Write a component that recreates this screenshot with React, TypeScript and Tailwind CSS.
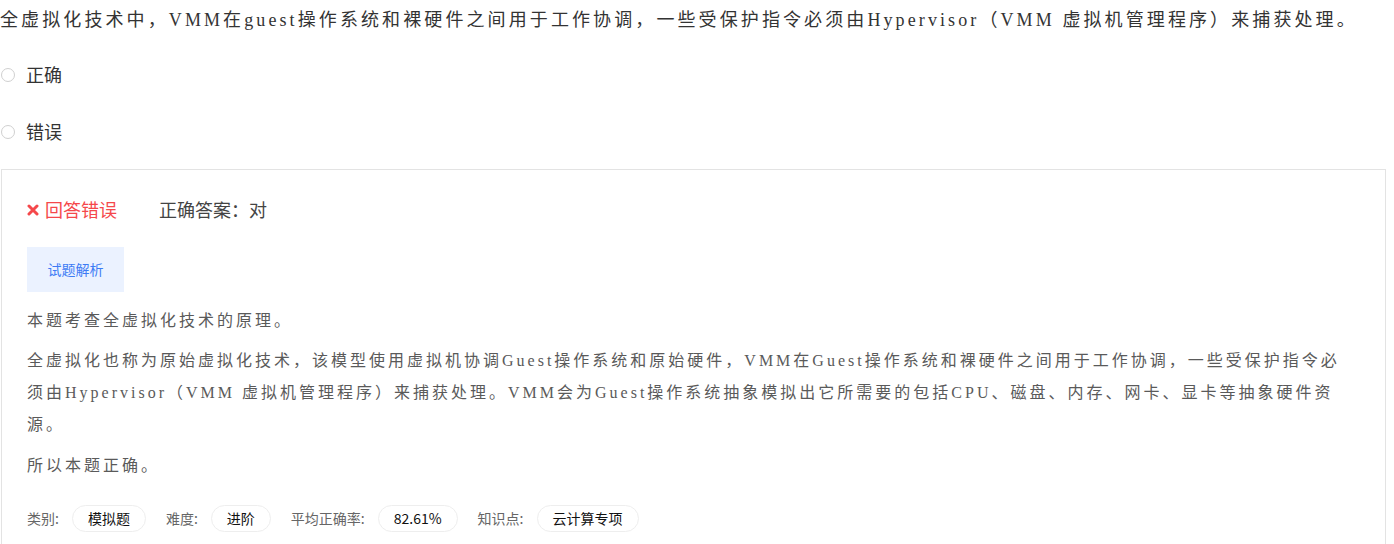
const serif = "font-['Liberation_Serif','Noto_Sans_CJK_SC',serif]"
const sans = "font-['Noto_Sans_CJK_SC',sans-serif]"

const Tag = ({ label, value }: { label: string; value: string }) => (
  <div className="flex flex-row items-center mr-[20px]">
    <span className="text-[14px] text-[#666]">{label}:</span>
    <span className="ml-[13px] px-[15px] h-[27px] flex items-center rounded-full border border-[#eee] text-[14px] text-[#111]">
      {value}
    </span>
  </div>
)

const Option = ({ text }: { text: string }) => (
  <div className="flex flex-row items-center h-[57px]">
    <span className="w-[14px] h-[14px] ml-[1px] rounded-full border border-[#d0d0d0]"></span>
    <span className="ml-[11px] text-[18px] text-[#333]">{text}</span>
  </div>
)

export default function App() {
  return (
    <div className={`w-[1394px] h-[544px] overflow-hidden bg-white ${sans}`}>
      <h1 className={`${serif} text-[18px] leading-[40px] tracking-[3.1px] text-[#333] whitespace-nowrap`}>
        全虚拟化技术中，VMM在guest操作系统和裸硬件之间用于工作协调，一些受保护指令必须由Hypervisor（VMM 虚拟机管理程序）来捕获处理。
      </h1>
      <div className="mt-[6px]">
        <Option text="正确" />
        <Option text="错误" />
      </div>
      <div className="ml-[1px] mt-[9px] w-[1385px] border border-[#e3e3e3] pl-[25px] pt-[25px]">
        <div className="flex flex-row items-center h-[28px]">
          <svg width="12" height="12" viewBox="0 0 12 12" className="mt-[1px]">
            <path d="M2 2 L10 10 M10 2 L2 10" stroke="#f5484b" strokeWidth="3" strokeLinecap="round" />
          </svg>
          <span className="ml-[6px] text-[18px] text-[#f5484b]">回答错误</span>
          <span className="ml-[42px] text-[18px] text-[#444]">正确答案：对</span>
        </div>
        <button className="mt-[24px] w-[97px] h-[45px] bg-[#ebf2ff] text-[14px] text-[#3d7cf5]">试题解析</button>
        <div className={`${serif} mt-[13px] text-[16px] leading-[32px] tracking-[3px] text-[#5a5a5a] pr-[34px]`}>
          <p>本题考查全虚拟化技术的原理。</p>
          <p className="mt-[8px]">
            全虚拟化也称为原始虚拟化技术，该模型使用虚拟机协调Guest操作系统和原始硬件，VMM在Guest操作系统和裸硬件之间用于工作协调，一些受保护指令必须由Hypervisor（VMM 虚拟机管理程序）来捕获处理。VMM会为Guest操作系统抽象模拟出它所需要的包括CPU、磁盘、内存、网卡、显卡等抽象硬件资源。
          </p>
          <p className="mt-[9px]">所以本题正确。</p>
        </div>
        <div className="flex flex-row items-center mt-[22px] h-[28px]">
          <Tag label="类别" value="模拟题" />
          <Tag label="难度" value="进阶" />
          <Tag label="平均正确率" value="82.61%" />
          <Tag label="知识点" value="云计算专项" />
        </div>
        <div className="h-[60px]"></div>
      </div>
    </div>
  )
}
